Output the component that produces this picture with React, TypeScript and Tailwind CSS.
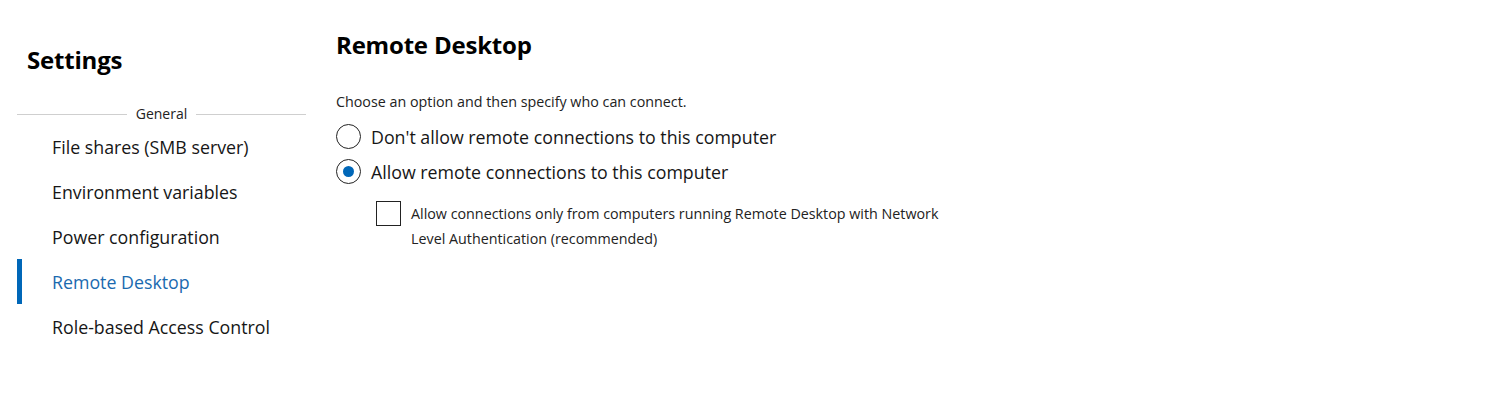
import React from "react";

const font = { fontFamily: '"Segoe UI", "Open Sans", "Noto Sans", sans-serif' };

const items = [
  "File shares (SMB server)",
  "Environment variables",
  "Power configuration",
  "Remote Desktop",
  "Role-based Access Control",
];

export default function App() {
  return (
    <div className="flex h-[409px] w-[1508px] bg-white text-[#000000]" style={font}>
      <aside className="ml-[17px] w-[289px] shrink-0 pt-[44px]">
        <h1 className="pl-[10px] text-[24px] font-bold leading-[32px] tracking-[-0.2px]">Settings</h1>
        <div className="mt-[28px] flex h-[20px] items-center">
          <div className="h-px flex-1 bg-[#cfcfcf]" />
          <span className="px-[9px] text-[14px] leading-[20px] text-[#222]">General</span>
          <div className="h-px flex-1 bg-[#cfcfcf]" />
        </div>
        <nav className="flex flex-col">
          {items.map((it, i) => {
            const active = i === 3;
            return (
              <div key={it} className="flex h-[45px] items-center">
                <div className={active ? "h-full w-[5px] bg-[#0067b8]" : "h-full w-[5px]"} />
                <span
                  className={
                    active
                      ? "pl-[30px] text-[17.8px] leading-[24px] text-[#1a6aaf]"
                      : "pl-[30px] text-[17.8px] leading-[24px] text-[#161616]"
                  }
                >
                  {it}
                </span>
              </div>
            );
          })}
        </nav>
      </aside>
      <main className="ml-[30px] flex-1 pt-[29px]">
        <h2 className="text-[24px] font-bold leading-[32px] tracking-[-0.2px]">Remote Desktop</h2>
        <p className="mt-[31px] text-[14.3px] leading-[20px] text-[#222]">
          Choose an option and then specify who can connect.
        </p>
        <div className="mt-[7px] flex flex-col">
          <label className="flex h-[35px] items-center">
            <span className="flex h-[25px] w-[25px] items-center justify-center rounded-full border-[1.5px] border-[#222]" />
            <span className="ml-[10px] text-[17.8px] leading-[24px] text-[#161616]">
              Don't allow remote connections to this computer
            </span>
          </label>
          <label className="flex h-[35px] items-center">
            <span className="flex h-[25px] w-[25px] items-center justify-center rounded-full border-[1.5px] border-[#222]">
              <span className="h-[11px] w-[11px] rounded-full bg-[#0067b8]" />
            </span>
            <span className="ml-[10px] text-[17.8px] leading-[24px] text-[#161616]">
              Allow remote connections to this computer
            </span>
          </label>
        </div>
        <div className="ml-[40px] mt-[12px] flex items-start">
          <span className="h-[25px] w-[25px] shrink-0 border-[1.5px] border-[#222] bg-white" />
          <p className="ml-[10px] w-[545px] text-[14.3px] leading-[25px] text-[#222]">
            Allow connections only from computers running Remote Desktop with Network Level Authentication (recommended)
          </p>
        </div>
      </main>
    </div>
  );
}
